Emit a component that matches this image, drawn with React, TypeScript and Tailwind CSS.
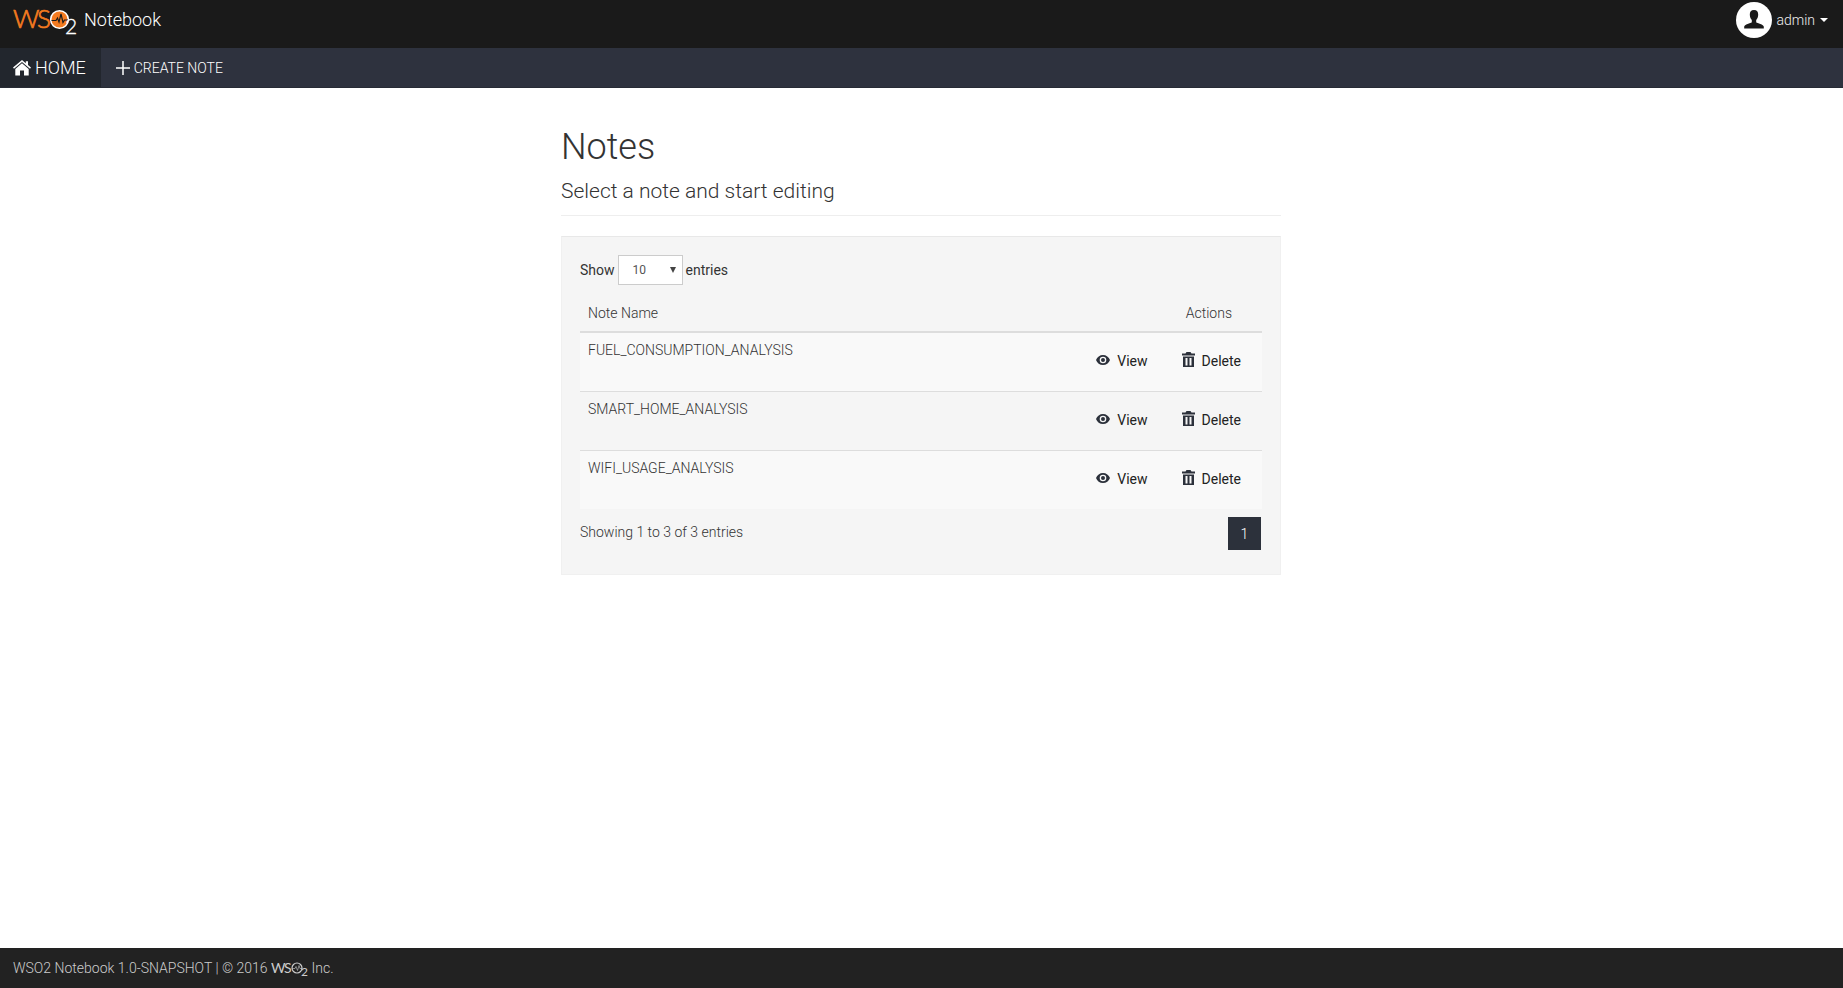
import React from "react";

const notes = ["FUEL_CONSUMPTION_ANALYSIS", "SMART_HOME_ANALYSIS", "WIFI_USAGE_ANALYSIS"];

function BrandLogo() {
  return (
    <svg className="h-10 w-16" viewBox="0 0 64 40" role="img" aria-label="WSO2">
      <text x="0" y="28" fontFamily="Lato" fontWeight="300" fontSize="26" fill="#f47b20" stroke="#f47b20" strokeWidth="0.700">W</text>
      <text x="24" y="28" fontFamily="Lato" fontWeight="300" fontSize="26" fill="#f47b20" stroke="#f47b20" strokeWidth="0.700">S</text>
      <circle cx="46.500" cy="19.500" r="8.800" fill="#f47b20" stroke="#fff" strokeWidth="1.600" />
      <path d="M38.500 20.500h4.500l1.500-2.500 1.500 4 2-8 2 8.500 1.500-2.500h3.500" fill="none" stroke="#1a1a1a" strokeWidth="1.200" />
      <text x="52" y="34" fontFamily="Lato" fontWeight="300" fontSize="21" fill="#fff" stroke="#fff" strokeWidth="0.300">2</text>
    </svg>
  );
}

function FooterLogo() {
  return (
    <svg className="h-5 w-[38px]" viewBox="0 0 38 20" role="img" aria-label="WSO2">
      <text x="0" y="15" fontFamily="Lato" fontWeight="400" fontSize="14" fill="#ccc">W</text>
      <text x="13" y="15" fontFamily="Lato" fontWeight="400" fontSize="14" fill="#ccc">S</text>
      <circle cx="26" cy="10" r="5" fill="none" stroke="#ccc" strokeWidth="1.200" />
      <path d="M21 10.500h3l1-2 1.500 4 1.500-5 1 3h2" fill="none" stroke="#ccc" strokeWidth="0.600" />
      <text x="30" y="18" fontFamily="Lato" fontWeight="400" fontSize="12" fill="#ccc">2</text>
    </svg>
  );
}

function UserAvatar() {
  return (
    <svg className="size-9" viewBox="0 0 36 36" aria-hidden="true">
      <circle cx="18" cy="18" r="18" fill="#fff" />
      <path d="M18 8c-3 0-4.300 2-4.200 4.800.1 2.700 1 4.200 2 5.200v2.300c-1 1.200-7.600 2-7.600 4.500v1.700h19.600v-1.700c0-2.500-6.600-3.300-7.600-4.500V18c1-1 1.900-2.500 2-5.200C22.300 10 21 8 18 8z" fill="#1a1a1a" />
    </svg>
  );
}

function HomeIcon() {
  return (
    <svg className="h-4 w-[18px]" viewBox="0 0 18 16" fill="#fff" aria-hidden="true">
      <path d="M9 0 0 7.500l1 1.200 8-6.700 8 6.700 1-1.200-3-2.500V1.200h-2.200v2z" />
      <path d="M9 3.300 2.300 8.900V15.500H7v-5h4v5h4.700V8.900z" />
    </svg>
  );
}

function EyeIcon() {
  return (
    <svg className="h-[10px] w-[14px]" viewBox="0 0 14 10" aria-hidden="true">
      <path fillRule="evenodd" d="M7 0C3.800 0 1.100 2 0 5c1.100 3 3.800 5 7 5s5.900-2 7-5c-1.100-3-3.800-5-7-5zm0 8.300a3.300 3.300 0 1 1 0-6.600 3.300 3.300 0 0 1 0 6.600zM7 3a2 2 0 1 0 0 4 2 2 0 0 0 0-4z" fill="#2c313b" />
    </svg>
  );
}

function TrashIcon() {
  return (
    <svg className="h-[15px] w-[13px]" viewBox="0 0 13 15" fill="#2c313b" aria-hidden="true">
      <path d="M0 1.500h3.500L4.500 0h4l1 1.500H13v2H0z" />
      <path fillRule="evenodd" d="M1 4.500h11V15H1zM3.500 6v7.500h2V6zm4 0v7.500h2V6z" />
    </svg>
  );
}

export default function App() {
  return (
    <div className="flex min-h-screen flex-col bg-white font-['Roboto',sans-serif] text-sm leading-5 font-light text-[#333]">
      <header className="flex h-12 items-start justify-between bg-[#1a1a1a] pl-[13px] pr-[15px] text-white">
        <a href="#" className="flex items-start gap-[7px]">
          <BrandLogo />
          <span className="pt-2 text-lg leading-6">Notebook</span>
        </a>
        <button type="button" className="flex items-center gap-1 pt-[2px] text-[#eee]">
          <UserAvatar />
          <span>admin</span>
          <svg className="ml-px h-1 w-2" viewBox="0 0 8 4" fill="#fff" aria-hidden="true">
            <path d="M0 0h8L4 4z" />
          </svg>
        </button>
      </header>

      <nav className="flex h-10 border-b border-[#272b35] bg-[#2e323e] text-white">
        <a href="#" className="flex items-center gap-1 bg-[#22262d] pl-[13px] pr-[15px] text-lg">
          <HomeIcon />
          HOME
        </a>
        <a href="#" className="flex items-center gap-1 pl-[15px]">
          <svg className="size-[14px]" viewBox="0 0 14 14" stroke="#fff" strokeWidth="1.500" aria-hidden="true">
            <path d="M7 0v14M0 7h14" />
          </svg>
          CREATE NOTE
        </a>
      </nav>

      <main className="mx-auto w-full max-w-[721px] flex-1 pt-[39px] pr-px">
        <h1 className="text-4xl leading-10">Notes</h1>
        <p className="border-b border-[#eee] pt-3 pb-3 text-[21px] leading-6">Select a note and start editing</p>

        <section className="mt-5 border border-[#f0f0f0] border-t-[#e8e8e8] bg-[#f5f5f5] px-[18px] pt-[18px] pb-6">
          <label className="flex items-center gap-[3px] font-normal">
            Show
            <span className="relative">
              <select className="h-[30px] w-[65px] appearance-none border border-[#ccc] bg-white pl-[14px] text-xs text-[#555]" defaultValue="10">
                <option>10</option>
                <option>25</option>
                <option>50</option>
              </select>
              <svg className="pointer-events-none absolute top-3 right-[7px] h-[6px] w-[6px]" viewBox="0 0 6 6" fill="#444" aria-hidden="true">
                <path d="M0 0h6L3 6z" />
              </svg>
            </span>
            entries
          </label>

          <table className="mt-[9px] w-full border-collapse">
            <thead>
              <tr className="border-b-2 border-[#ddd]">
                <th className="h-[38px] px-2 text-left font-light">Note Name</th>
                <th className="w-[195px] pr-[30px] text-right font-light">Actions</th>
              </tr>
            </thead>
            <tbody>
              {notes.map((note) => (
                <tr key={note} className="h-[59px] border-b border-[#ddd] last:border-b-0 odd:bg-[#f9f9f9]">
                  <td className="px-2 pt-[7px] align-top">{note}</td>
                  <td className="pt-[18px] pr-[21px] align-top">
                    <div className="flex justify-end gap-[34px] font-normal text-[#222]">
                      <button type="button" className="flex items-start gap-[7px]">
                        <span className="pt-1">
                          <EyeIcon />
                        </span>
                        View
                      </button>
                      <button type="button" className="flex items-start gap-[7px]">
                        <span className="pt-px">
                          <TrashIcon />
                        </span>
                        Delete
                      </button>
                    </div>
                  </td>
                </tr>
              ))}
            </tbody>
          </table>

          <div className="flex items-start justify-between pt-2 pr-px">
            <p className="pt-[5px]">Showing 1 to 3 of 3 entries</p>
            <button type="button" className="size-[33px] bg-[#2c313b] text-white">1</button>
          </div>
        </section>
      </main>

      <footer className="flex h-10 items-center gap-[3px] bg-[#222] px-[13px] text-[#ccc]">
        <span>WSO2 Notebook 1.0-SNAPSHOT | © 2016</span>
        <FooterLogo />
        <span>Inc.</span>
      </footer>
    </div>
  );
}
